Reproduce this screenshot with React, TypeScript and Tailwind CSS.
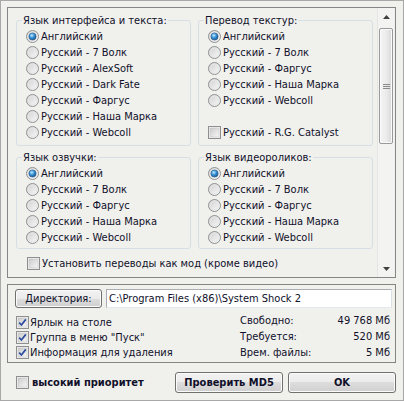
import React from "react";

const FONT = { fontFamily: '"DejaVu Sans Condensed", "Liberation Sans", sans-serif' };

function Radio({ checked }: { checked?: boolean }) {
  return (
    <svg width="13" height="13" viewBox="0 0 13 13" className="shrink-0">
      <defs>
        <linearGradient id="rbg" x1="0" y1="0" x2="1" y2="1">
          <stop offset="0" stopColor="#cfcfcf" />
          <stop offset="1" stopColor="#fbfbfb" />
        </linearGradient>
        <radialGradient id="rdot" cx="0.4" cy="0.35" r="0.7">
          <stop offset="0" stopColor="#c6ecff" />
          <stop offset="0.45" stopColor="#3c98dc" />
          <stop offset="1" stopColor="#164a80" />
        </radialGradient>
      </defs>
      <circle cx="6.5" cy="6.5" r="6" fill="url(#rbg)" stroke="#8f9092" strokeWidth="1" />
      <circle cx="6.5" cy="6.5" r="4.5" fill="none" stroke="#e6e6e6" strokeWidth="1" />
      {checked && <circle cx="6.5" cy="6.5" r="3.6" fill="url(#rdot)" stroke="#2a5b8f" strokeWidth="0.6" />}
    </svg>
  );
}

function Check({ checked }: { checked?: boolean }) {
  return (
    <svg width="13" height="13" viewBox="0 0 13 13" className="shrink-0">
      <defs>
        <linearGradient id="cbg" x1="0" y1="0" x2="1" y2="1">
          <stop offset="0" stopColor="#cbcbcb" />
          <stop offset="1" stopColor="#f7f7f7" />
        </linearGradient>
      </defs>
      <rect x="0.5" y="0.5" width="12" height="12" fill="#f4f4f4" stroke="#8f8f8f" />
      <rect x="2" y="2" width="9" height="9" fill="url(#cbg)" stroke="#bdbdbd" strokeWidth="0.5" />
      {checked && (
        <path d="M3.2 6.6 L5.4 9 L9.8 3.4" fill="none" stroke="#2d4e9e" strokeWidth="1.7" strokeLinejoin="round" />
      )}
    </svg>
  );
}

function RadioItem({ label, checked }: { label: string; checked?: boolean }) {
  return (
    <div className="h-[16px] flex items-center gap-[2px]">
      <Radio checked={checked} />
      <span>{label}</span>
    </div>
  );
}

function Group({ title, children, pb }: { title: string; children: React.ReactNode; pb: string }) {
  return (
    <fieldset className={`min-w-0 border border-[#d5dfe5] rounded-[3px] pl-[9px] pr-[4px] flex flex-col ${pb}`}>
      <legend className="ml-[-4px] px-[1px] h-[13px] leading-[13px]">{title}</legend>
      <div className="pt-[1px] flex flex-col flex-1">{children}</div>
    </fieldset>
  );
}

function Button({ children, className }: { children: React.ReactNode; className: string }) {
  return (
    <button
      className={`border border-[#707070] rounded-[3px] bg-[linear-gradient(to_bottom,#f2f2f2_0%,#ebebeb_50%,#dddddd_50%,#cfcfcf_100%)] shadow-[inset_0_0_0_1px_#fbfbfb] flex items-center justify-center text-[#10102a] ${className}`}
    >
      {children}
    </button>
  );
}

function ScrollBar() {
  return (
    <div className="w-[17px] mr-[1px] flex flex-col bg-[#f3f4f1] border-l border-[#e4e6e2]">
      <div className="h-[17px] flex items-center justify-center">
        <svg width="7" height="4" viewBox="0 0 7 4">
          <path d="M0 4 L3.5 0 L7 4 Z" fill="#404040" />
        </svg>
      </div>
      <div className="mt-[3px] h-[116px] mx-[1px] rounded-[2px] border border-[#999a9c] bg-[linear-gradient(to_right,#f4f4f4_0%,#ececec_50%,#d8d8d8_100%)] shadow-[inset_0_0_0_1px_#fafafa] flex flex-col items-center justify-center gap-[1px]">
        <div className="w-[7px] h-[1px] bg-[#8a8a8a]" />
        <div className="w-[7px] h-[1px] bg-[#8a8a8a]" />
        <div className="w-[7px] h-[1px] bg-[#8a8a8a]" />
      </div>
      <div className="flex-1" />
      <div className="h-[17px] flex items-center justify-center">
        <svg width="7" height="4" viewBox="0 0 7 4">
          <path d="M0 0 L3.5 4 L7 0 Z" fill="#404040" />
        </svg>
      </div>
    </div>
  );
}

export default function App() {
  return (
    <div
      className="w-[404px] h-[401px] border border-[#a8a8a8] bg-[#f0f0ed] pl-[6px] pr-[7px] pt-[6px] flex flex-col text-[11px] leading-[13px] text-[#10102a]"
      style={FONT}
    >
      {/* Top panel */}
      <div className="h-[271px] border border-[#858585] flex">
        <div className="flex-1 pl-[8px] pr-[4px] pt-[6px] flex flex-col">
          <div className="grid grid-cols-2 gap-x-[7px]">
            <Group title="Язык интерфейса и текста:" pb="pb-[5px]">
              <RadioItem label="Английский" checked />
              <RadioItem label="Русский - 7 Волк" />
              <RadioItem label="Русский - AlexSoft" />
              <RadioItem label="Русский - Dark Fate" />
              <RadioItem label="Русский - Фаргус" />
              <RadioItem label="Русский - Наша Марка" />
              <RadioItem label="Русский - Webcoll" />
            </Group>
            <Group title="Перевод текстур:" pb="pb-[5px]">
              <RadioItem label="Английский" checked />
              <RadioItem label="Русский - 7 Волк" />
              <RadioItem label="Русский - Фаргус" />
              <RadioItem label="Русский - Наша Марка" />
              <RadioItem label="Русский - Webcoll" />
              <div className="mt-auto h-[16px] flex items-center gap-[2px]">
                <Check />
                <span>Русский - R.G. Catalyst</span>
              </div>
            </Group>
          </div>
          <div className="mt-[5px] grid grid-cols-2 gap-x-[7px]">
            <Group title="Язык озвучки:" pb="pb-[3px]">
              <RadioItem label="Английский" checked />
              <RadioItem label="Русский - 7 Волк" />
              <RadioItem label="Русский - Фаргус" />
              <RadioItem label="Русский - Наша Марка" />
              <RadioItem label="Русский - Webcoll" />
            </Group>
            <Group title="Язык видеороликов:" pb="pb-[3px]">
              <RadioItem label="Английский" checked />
              <RadioItem label="Русский - 7 Волк" />
              <RadioItem label="Русский - Фаргус" />
              <RadioItem label="Русский - Наша Марка" />
              <RadioItem label="Русский - Webcoll" />
            </Group>
          </div>
          <div className="mt-[6px] ml-[11px] h-[16px] flex items-center gap-[2px]">
            <Check />
            <span>Установить переводы как мод (кроме видео)</span>
          </div>
        </div>
        <ScrollBar />
      </div>

      {/* Directory panel */}
      <div className="mt-[6px] h-[79px] border border-[#858585] pl-[7px] pr-[3px] pt-[4px] pb-[2px] flex flex-col">
        <div className="flex gap-[4px] h-[19px]">
          <Button className="w-[87px] h-[19px]">Директория:</Button>
          <div className="flex-1 h-[19px] bg-white border border-[#abadb3] border-b-[#e3e9ef] border-r-[#dbdfe6] pl-[2px] flex items-center">
            C:\Program Files (x86)\System Shock 2
          </div>
        </div>
        <div className="mt-[4px] flex items-end">
          <div className="flex-1 ml-[1px] flex flex-col">
            <div className="h-[15px] flex items-center gap-[1px]">
              <Check checked />
              <span>Ярлык на столе</span>
            </div>
            <div className="h-[15px] flex items-center gap-[1px]">
              <Check checked />
              <span>Группа в меню "Пуск"</span>
            </div>
            <div className="h-[15px] flex items-center gap-[1px]">
              <Check checked />
              <span>Информация для удаления</span>
            </div>
          </div>
          <div className="w-[150px] mr-[2px] grid grid-cols-[auto_1fr] auto-rows-[16px] items-center">
            <span>Свободно:</span>
            <span className="text-right">49 768 Мб</span>
            <span>Требуется:</span>
            <span className="text-right">520 Мб</span>
            <span>Врем. файлы:</span>
            <span className="text-right">5 Мб</span>
          </div>
        </div>
      </div>

      {/* Bottom row */}
      <div className="mt-[9px] h-[21px] flex items-center">
        <div className="ml-[9px] flex items-center gap-[3px] font-bold">
          <Check />
          <span>высокий приоритет</span>
        </div>
        <div className="ml-auto flex gap-[5px]">
          <Button className="w-[108px] h-[21px] font-bold">Проверить MD5</Button>
          <Button className="w-[108px] h-[21px] font-bold">OK</Button>
        </div>
      </div>
    </div>
  );
}
